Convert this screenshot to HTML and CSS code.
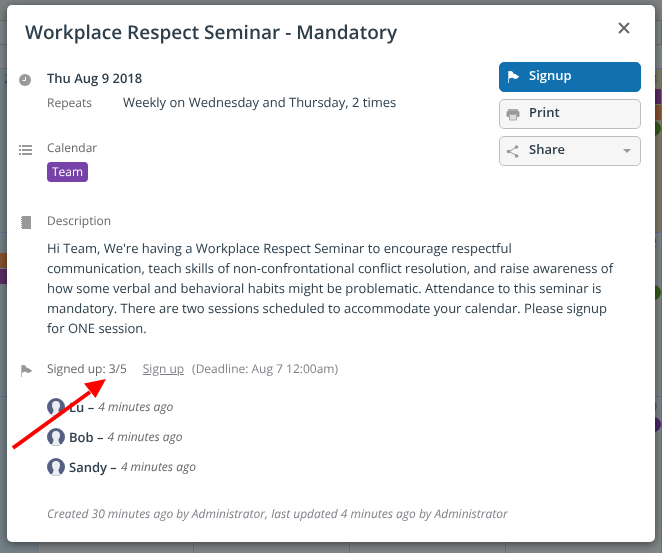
FILE: index.html
```html
<!DOCTYPE html>
<html lang="en">
<head>
    <meta charset="UTF-8">
    <meta name="viewport" content="width=device-width, initial-scale=1.0">
    <title>Workplace Respect Seminar - Mandatory</title>
    <link rel="stylesheet" href="styles.css">
</head>
<body>
<!-- dimmed calendar behind the dialog -->
<div class="calendar" aria-hidden="true">
    <div class="calendar-top"></div>
    <div class="week week-head"><div></div><div></div><div></div><div></div><div></div></div>
    <div class="all-day"></div>
    <div class="week">
        <div class="day past"><span class="number">2</span></div>
        <div class="day"></div>
        <div class="day"></div>
        <div class="day"></div>
        <div class="day today">
            <span class="number">8</span>
            <span class="event purple"></span>
            <span class="event orange"></span>
            <span class="event green round"></span>
        </div>
    </div>
    <div class="week">
        <div class="day past">
            <span class="event orange"></span>
            <span class="event purple"></span>
        </div>
        <div class="day"></div>
        <div class="day"></div>
        <div class="day"></div>
        <div class="day">
            <span class="number">2</span>
            <span class="event"></span>
            <span class="event"></span>
            <span class="event green round"></span>
        </div>
    </div>
    <div class="week">
        <div class="day past"></div>
        <div class="day"></div>
        <div class="day"></div>
        <div class="day"></div>
        <div class="day">
            <span class="number">9</span>
            <span class="event violet round"></span>
        </div>
    </div>
</div>

<main class="dialog" role="dialog" aria-labelledby="title">
    <header class="dialog-header">
        <h1 id="title">Workplace Respect Seminar - Mandatory</h1>
        <button class="close" type="button" aria-label="Close">
            <svg width="12" height="12" viewBox="0 0 12 12"><path d="M1 1 11 11M11 1 1 11" stroke="#666" stroke-width="2" fill="none"/></svg>
        </button>
    </header>

    <div class="top">
        <div class="details">
            <section class="row when">
                <svg class="icon" width="14" height="14" viewBox="0 0 14 14"><circle cx="6" cy="7" r="6" fill="#999"/><path d="M6.500 4V7.500H3.500" stroke="#fff" fill="none"/></svg>
                <div>
                    <h2>Thu Aug 9 2018</h2>
                    <div class="repeats">
                        <span class="label">Repeats</span>
                        <span>Weekly on Wednesday and Thursday, 2 times</span>
                    </div>
                </div>
            </section>
            <section class="row">
                <svg class="icon" width="14" height="14" viewBox="0 0 14 14"><path d="M0 3h2M0 7h2M0 11h2M3 3h10M3 7h10M3 11h10" stroke="#999" stroke-width="2"/></svg>
                <div>
                    <div class="label">Calendar</div>
                    <span class="tag">Team</span>
                </div>
            </section>
        </div>
        <div class="actions">
            <button class="btn primary" type="button">
                <svg width="14" height="14" viewBox="0 0 14 14"><path d="M2.500 1v12" stroke="#fff" stroke-opacity=".7"/><path d="M3 1.500C5 .5 7 1.200 7.500 3.700 9.500 3.500 11 5.500 13.200 6.500 11.500 9 9 9.500 7.500 8.200 6 7.500 4.500 8 3 9z" fill="#fff"/></svg>
                Signup
            </button>
            <button class="btn" type="button">
                <svg width="14" height="14" viewBox="0 0 14 14"><path d="M2 2h10v2H2z" fill="#aaa"/><rect x=".5" y="4" width="13" height="6" rx="1.500" fill="#999"/><path d="M3.500 7.500h7V13h-7z" fill="#ddd" stroke="#aaa"/></svg>
                Print
            </button>
            <button class="btn" type="button">
                <svg width="14" height="14" viewBox="0 0 14 14"><path d="M10.500 3 3 7.500l7.500 4" stroke="#999" fill="none"/><circle cx="10.500" cy="3" r="1.800" fill="#999"/><circle cx="2.500" cy="7.500" r="1.800" fill="#999"/><circle cx="10.500" cy="12" r="1.800" fill="#999"/></svg>
                Share
                <svg class="caret" width="8" height="4" viewBox="0 0 8 4"><path d="M0 0h8L4 4z" fill="#999"/></svg>
            </button>
        </div>
    </div>

    <section class="row description">
        <svg class="icon" width="14" height="14" viewBox="0 0 14 14"><path d="M3 0h9v13H3z" fill="#999"/><path d="M2.500 1v12" stroke="#999" stroke-dasharray="1 1"/></svg>
        <div>
            <div class="label">Description</div>
            <p>
                Hi Team, We're having a Workplace Respect Seminar to encourage respectful<br>
                communication, teach skills of non-confrontational conflict resolution, and raise awareness of<br>
                how some verbal and behavioral habits might be problematic. Attendance to this seminar is<br>
                mandatory. There are two sessions scheduled to accommodate your calendar. Please signup<br>
                for ONE session.
            </p>
        </div>
    </section>

    <section class="row attendees">
        <svg class="icon" width="14" height="14" viewBox="0 0 14 14"><path d="M2.500 1v12" stroke="#bbb"/><path d="M3 1.500C5 .5 7 1.200 7.500 3.700 9.500 3.500 11 5.500 13.200 6.500 11.500 9 9 9.500 7.500 8.200 6 7.500 4.500 8 3 9z" fill="#999"/></svg>
        <div>
            <div class="signups">
                <span class="label">Signed up: 3/5</span>
                <a href="#signup">Sign up</a>
                <span class="deadline">(Deadline: Aug 7 12:00am)</span>
            </div>
            <ul class="people">
                <li>
                    <svg class="avatar" viewBox="0 0 18 18"><use href="#person"/></svg>
                    <b>Lu –</b> <i>4 minutes ago</i>
                </li>
                <li>
                    <svg class="avatar" viewBox="0 0 18 18"><use href="#person"/></svg>
                    <b>Bob –</b> <i>4 minutes ago</i>
                </li>
                <li>
                    <svg class="avatar" viewBox="0 0 18 18"><use href="#person"/></svg>
                    <b>Sandy –</b> <i>4 minutes ago</i>
                </li>
            </ul>
        </div>
    </section>

    <footer>Created 30 minutes ago by Administrator, last updated 4 minutes ago by Administrator</footer>

    <svg class="arrow" width="96" height="72" viewBox="0 0 96 72"><path d="M1 70 78 14" stroke="#f00" stroke-width="4"/><path d="M94 1 72 5.500 83.500 20z" fill="#f00"/></svg>
</main>

<svg class="symbols" width="0" height="0">
    <symbol id="person" viewBox="0 0 18 18">
        <circle cx="9" cy="9" r="9" fill="#566083"/>
        <path d="M9 3C6.500 3 5 4.500 5 7c0 2 .8 3.500 1.500 4.500 0 2-.5 3-2 5a9 9 0 0 0 9 0c-1.500-2-2-3-2-5C12.200 10.500 13 9 13 7c0-2.500-1.500-4-4-4z" fill="#e9eef0"/>
    </symbol>
</svg>
</body>
</html>
```
FILE: styles.css
```css
* {
    box-sizing: border-box;
    margin: 0;
    padding: 0;
}

body {
    font-family: 'Open Sans', sans-serif;
    font-size: 13px;
    line-height: 20px;
    text-rendering: geometricPrecision;
    color: #2c3e4a;
    background-color: #808588;
    min-height: 100vh;
    padding: 5px 7px 11px;
}

/* Calendar in the background */
.calendar {
    position: fixed;
    inset: 0;
    overflow: hidden;
}

.calendar-top {
    height: 21px;
    background-color: #7c8082;
    border-bottom: 1px solid #696d70;
}

.week {
    display: grid;
    grid-template-columns: 38px repeat(4, 1fr);
    height: 164px;
}

.week-head {
    height: 24px;
    border-bottom: 1px solid #696d70;
}

.week-head div {
    border-right: 1px solid #696d70;
}

.all-day {
    height: 24px;
    border-bottom: 1px solid #5f7594;
}

.day {
    border-right: 1px solid #5f7594;
    border-bottom: 1px solid #5f7594;
}

.past {
    background-color: #748187;
}

.today {
    background-color: #7f7d68;
}

.number {
    display: block;
    height: 20px;
    padding: 0 4px;
    font-size: 12px;
    color: #2c5577;
}

.day:last-child .number {
    text-align: right;
}

.event {
    display: block;
    height: 15px;
    margin-bottom: 1px;
}

.past .event:first-child {
    margin-top: 20px;
}

.purple {
    background-color: #5b2c63;
}

.orange {
    background-color: #87512f;
}

.green {
    background-color: #355a1c;
}

.violet {
    background-color: #47296b;
}

.round {
    border-radius: 8px;
}

/* Dialog */
.dialog {
    position: relative;
    min-height: calc(100vh - 16px);
    background-color: #fff;
    border-radius: 5px;
    box-shadow: 0 2px 10px rgba(0, 0, 0, 0.5);
    padding: 14px 14px 18px 12px;
}

.dialog-header {
    display: flex;
    justify-content: space-between;
    height: 43px;
    padding: 0 11px 0 6px;
}

h1 {
    font-size: 19px;
    line-height: 26px;
    font-weight: 600;
}

.close {
    align-self: flex-start;
    display: flex;
    margin-top: 3px;
    border: none;
    background: none;
    cursor: pointer;
}

.top {
    display: flex;
    justify-content: space-between;
}

.row {
    display: flex;
    gap: 14px;
    margin-bottom: 25px;
}

.icon {
    flex: none;
    margin-top: 5px;
}

.when {
    padding-top: 6px;
}

h2 {
    font-size: 13px;
    line-height: 20px;
    font-weight: 600;
}

.repeats {
    display: flex;
    align-items: baseline;
    gap: 31px;
    margin-top: 4px;
}

.label {
    font-size: 12px;
    color: #666;
}

.tag {
    display: inline-block;
    margin: 4px 0;
    padding: 0 5px;
    border-radius: 4px;
    background-color: #7743a8;
    color: #fff;
    font-size: 12px;
}

.actions {
    display: flex;
    flex-direction: column;
    gap: 7px;
    width: 142px;
}

.btn {
    display: flex;
    align-items: center;
    gap: 9px;
    height: 30px;
    padding: 0 9px 4px 6px;
    border: 1px solid #bcbfc2;
    border-radius: 5px;
    background-color: #f6f6f6;
    color: #2c3e4a;
    font: 600 13px 'Open Sans', sans-serif;
    cursor: pointer;
}

.btn svg {
    margin-top: 3px;
}

.btn .caret {
    margin-left: auto;
}

.primary {
    border-color: #1070b0;
    background-color: #1070b0;
    color: #fff;
}

.description {
    margin-bottom: 21px;
}

.description p {
    margin-top: 7px;
}

.signups {
    display: flex;
    font-size: 12px;
    color: #808088;
}

.signups a {
    margin: 0 8px 0 16px;
    color: inherit;
}

.attendees {
    margin-bottom: 22px;
}

.people {
    list-style: none;
    margin-top: 13px;
}

.people li {
    display: flex;
    align-items: center;
    gap: 4px;
    height: 30px;
}

.people b {
    font-weight: 600;
}

.people i {
    font-size: 12px;
    color: #666;
}

.avatar {
    width: 18px;
    height: 18px;
}

footer {
    padding-left: 28px;
    font-size: 12px;
    font-style: italic;
    color: #808088;
}

/* Pointer drawn over the signup count */
.arrow {
    position: absolute;
    left: 5px;
    top: 373px;
}

.symbols {
    position: absolute;
}
```
